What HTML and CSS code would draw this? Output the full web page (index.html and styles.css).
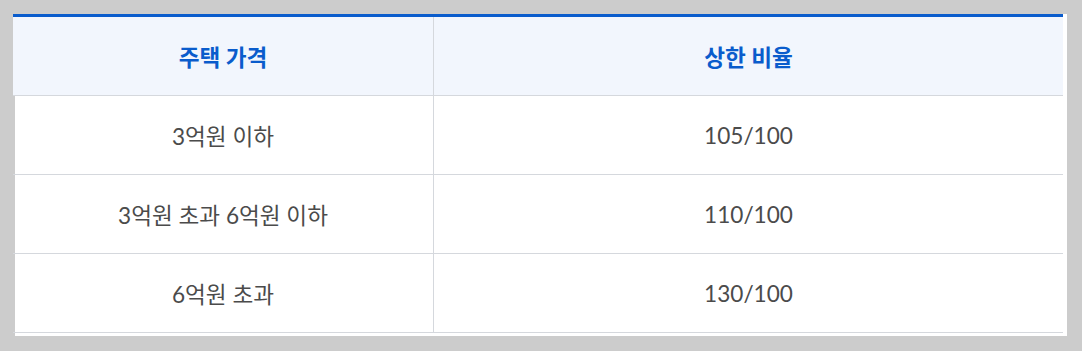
FILE: index.html
```html
<!DOCTYPE html>
<html lang="ko">
<head>
<meta charset="utf-8">
<title>주택 가격별 상한 비율</title>
<link rel="stylesheet" href="styles.css">
</head>
<body>
<div class="card">
  <table class="rate-table">
    <thead>
      <tr>
        <th class="col-price">주택 가격</th>
        <th class="col-rate">상한 비율</th>
      </tr>
    </thead>
    <tbody>
      <tr><td>3억원 이하</td><td>105/100</td></tr>
      <tr><td>3억원 초과 6억원 이하</td><td>110/100</td></tr>
      <tr><td>6억원 초과</td><td>130/100</td></tr>
    </tbody>
  </table>
</div>
</body>
</html>
```
FILE: styles.css
```css
html, body {
  margin: 0;
  padding: 0;
}

body {
  background: #cccccc;
  padding: 14px 0 0 15px;
  font-family: Lato, "Noto Sans CJK KR", sans-serif;
}

.card {
  width: 1052px;
  height: 322px;
  background: #ffffff;
}

.rate-table {
  margin-left: -2px;
  width: 1050px;
  border-collapse: collapse;
  border-top: 3px solid #0a5ccc;
  table-layout: fixed;
}

.rate-table th,
.rate-table td {
  text-align: center;
  font-size: 22.6px;
  padding: 0;
}

.rate-table th {
  height: 78px;
  background: #f2f6fd;
  color: #0a5ccc;
  font-weight: 700;
  border-bottom: 1px solid #d5d8dd;
}

.rate-table td {
  height: 78px;
  color: #4b4b4b;
  font-weight: 400;
  border-bottom: 1px solid #d5d8dd;
}

.col-price {
  width: 420px;
}

.rate-table th + th,
.rate-table td + td {
  border-left: 1px solid #d5d8dd;
}
```
